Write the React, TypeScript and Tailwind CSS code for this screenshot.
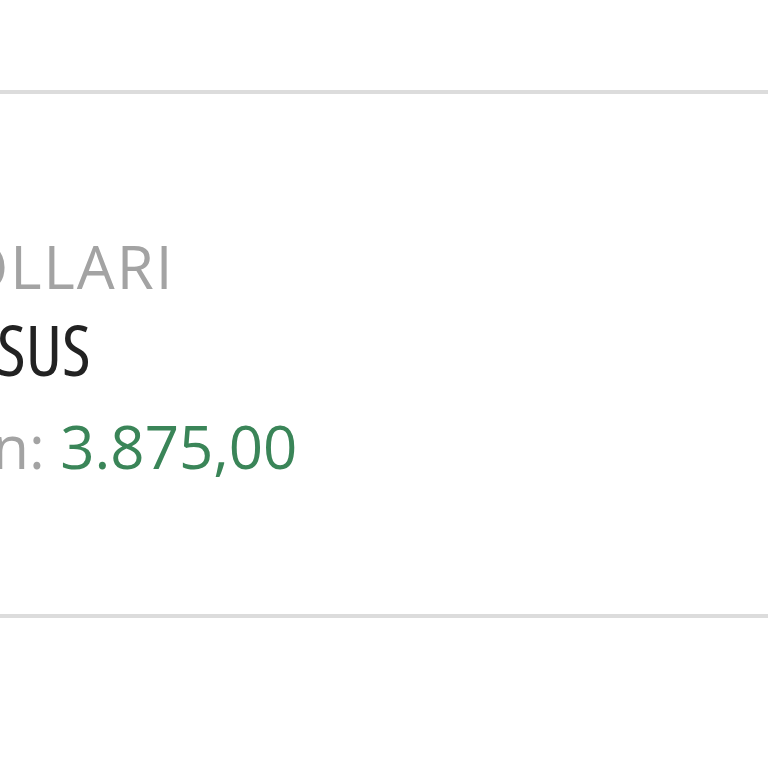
export default function App() {
  return (
    <div className="h-[768px] w-[768px] overflow-hidden bg-white font-['Open_Sans',sans-serif]">
      <div className="h-[90px]" />
      <div className="h-[528px] border-y-4 border-[#dcdcdc] pt-[142px]">
        <div className="ml-[-84px] text-[60px] font-normal font-stretch-[95%] tracking-[2px] leading-none text-[#a3a3a3]">DOLLARI</div>
        <div className="ml-[-69px] mt-[18px] text-[70px] font-normal font-stretch-semi-condensed leading-none text-[#222]">GESUS</div>
        <div className="ml-[-23px] mt-[32px] text-[60px] font-normal leading-none text-[#a3a3a3]">
          in: <span className="text-[#3a8558]">3.875,00</span>
        </div>
      </div>
    </div>
  );
}
